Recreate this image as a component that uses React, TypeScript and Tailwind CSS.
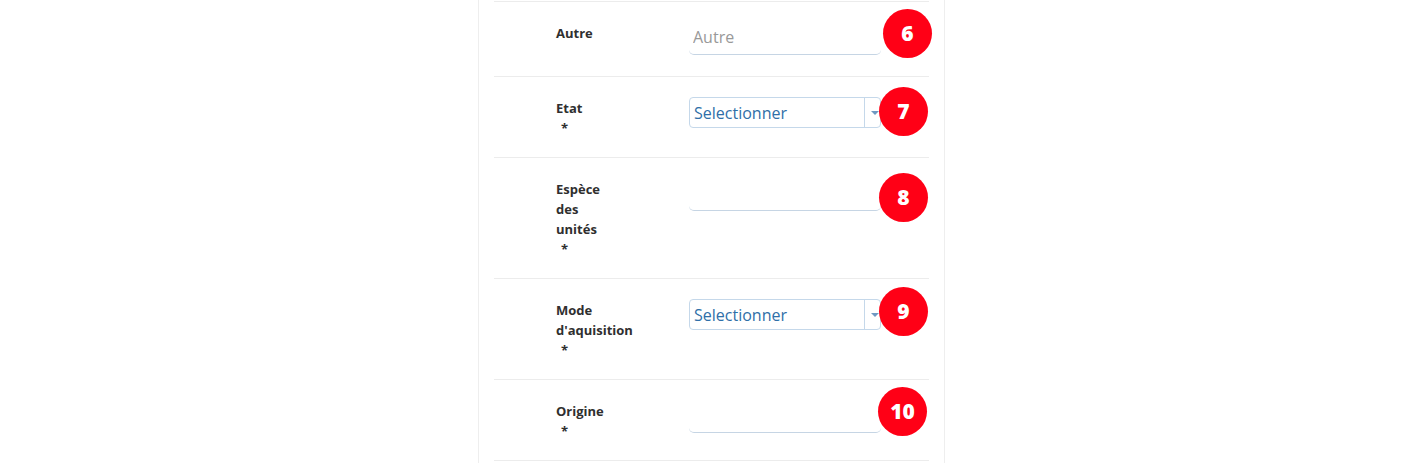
import React from "react";

type Field = {
  lines: string[];
  required: boolean;
  kind: "text" | "select";
  placeholder?: string;
  badge: string;
  badgePos: string;
};

const fields: Field[] = [
  { lines: ["Autre"], required: false, kind: "text", placeholder: "Autre", badge: "6", badgePos: "top-[7px] left-[389px]" },
  { lines: ["Etat"], required: true, kind: "select", badge: "7", badgePos: "top-[10px] left-[385px]" },
  { lines: ["Espèce", "des", "unités"], required: true, kind: "text", badge: "8", badgePos: "top-[15px] left-[385px]" },
  { lines: ["Mode", "d'aquisition"], required: true, kind: "select", badge: "9", badgePos: "top-[8px] left-[385px]" },
  { lines: ["Origine"], required: true, kind: "text", badge: "10", badgePos: "top-[7px] left-[384px]" },
];

function Badge({ n, pos }: { n: string; pos: string }) {
  return (
    <div
      className={`absolute ${pos} w-[49px] h-[49px] rounded-full bg-[#ff0016] flex items-center justify-center text-white text-[21px] font-extrabold leading-none`}
    >
      {n}
    </div>
  );
}

function Row({ field }: { field: Field }) {
  return (
    <div className="relative flex border-t border-[#ececec] pt-[18px] pb-[19px] pl-[62px]">
      <div className="w-[133px] shrink-0 mt-[3px] text-[13px] leading-[20px] font-bold text-[#2f2f2f]">
        <div className="w-[60px]">
          {field.lines.map((l) => (
            <div key={l}>{l}</div>
          ))}
          {field.required && <div className="pl-[5px]">*</div>}
        </div>
      </div>
      {field.kind === "text" ? (
        <input
          className="w-[192px] h-[35px] mb-[2px] pl-[4px] rounded-[5px] border-b border-[#c6d5e4] outline-none text-[16px] text-[#555] placeholder:text-[#999999] bg-white"
          placeholder={field.placeholder}
        />
      ) : (
        <div className="mt-[2px] w-[192px] h-[31px] flex rounded-[4px] border border-[#c5d8ea] bg-white">
          <div className="flex-1 pl-[4px] flex items-center text-[16px] text-[#2f6fa8]">Selectionner</div>
          <div className="w-[16px] border-l border-[#c5d8ea] flex items-center justify-end pr-[1px]">
            <div className="w-0 h-0 border-l-[4px] border-r-[4px] border-t-[4px] border-l-transparent border-r-transparent border-t-[#6f98c2]" />
          </div>
        </div>
      )}
      <Badge n={field.badge} pos={field.badgePos} />
    </div>
  );
}

export default function App() {
  return (
    <div className="min-h-[463px] bg-white" style={{ fontFamily: '"Open Sans", "Noto Sans", sans-serif' }}>
      <div className="ml-[478px] w-[467px] min-h-[463px] border-x border-[#eeeeee] px-[15px] pt-px">
        {fields.map((f) => (
          <Row key={f.badge} field={f} />
        ))}
        <div className="border-t border-[#ececec] h-[20px]" />
      </div>
    </div>
  );
}
